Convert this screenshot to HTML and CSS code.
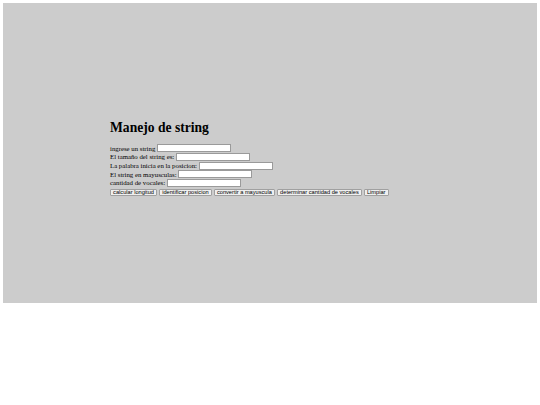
FILE: index.html
```html
<!DOCTYPE html>
<html lang="es">
<head>
<meta charset="utf-8">
<title>Manejo de string</title>
<link rel="stylesheet" href="styles.css">
</head>
<body>
<div class="panel">
  <h1 class="title">Manejo de string</h1>
  <div class="row"><span>ingrese un string</span><input class="field" type="text"></div>
  <div class="row"><span>El tamaño del string es:</span><input class="field" type="text"></div>
  <div class="row"><span>La palabra inicia en la posicion:</span><input class="field" type="text"></div>
  <div class="row"><span>El string en mayusculas:</span><input class="field" type="text"></div>
  <div class="row"><span>cantidad de vocales:</span><input class="field" type="text"></div>
  <div class="buttons">
    <button class="btn">calcular longitud</button>
    <button class="btn">identificar posicion</button>
    <button class="btn">convertir a mayuscula</button>
    <button class="btn">determinar cantidad de vocales</button>
    <button class="btn">Limpiar</button>
  </div>
</div>
</body>
</html>
```
FILE: styles.css
```css
html, body {
  margin: 0;
  padding: 0;
  background: #ffffff;
}
body {
  padding: 3px;
  font-family: "Liberation Serif", "Times New Roman", serif;
}
.panel {
  background: #cccccc;
  height: 300px;
  box-sizing: border-box;
  padding: 116.8px 0 0 107px;
  color: #000;
}
.title {
  font-size: 13.6px;
  font-weight: bold;
  margin: 0 0 9.1px 0;
  line-height: 15px;
}
.row {
  display: flex;
  align-items: center;
  height: 8.7px;
  font-size: 6.8px;
  white-space: nowrap;
}
.field {
  box-sizing: border-box;
  width: 74px;
  height: 8px;
  margin: 0 0 0 1.7px;
  padding: 0;
  border: 1px solid #9a9a9a;
  background: #ffffff;
  font-size: 5.6px;
  outline: none;
}
.buttons {
  display: flex;
  gap: 2px;
  margin-top: 1.6px;
}
.btn {
  box-sizing: border-box;
  height: 7px;
  margin: 0;
  padding: 0 2.1px;
  border: 1px solid #a0a0a0;
  border-radius: 1px;
  background: #efefef;
  font-family: "Liberation Sans", Arial, sans-serif;
  font-size: 5.67px;
  line-height: 5px;
  color: #000;
}
```
